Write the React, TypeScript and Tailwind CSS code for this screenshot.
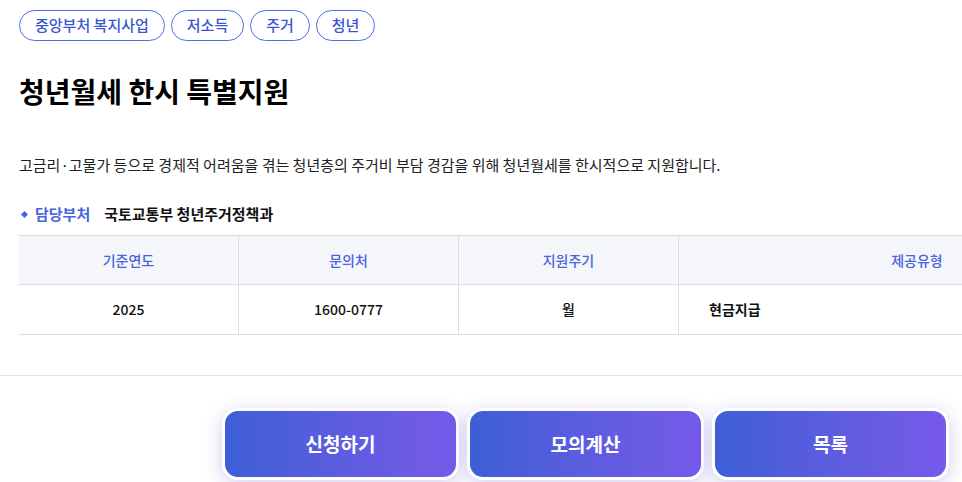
import React from 'react'

const tags = ['중앙부처 복지사업', '저소득', '주거', '청년']

const columns = [
  { label: '기준연도', value: '2025' },
  { label: '문의처', value: '1600-0777' },
  { label: '지원주기', value: '월' },
]

function ActionButton({ label }: { label: string }) {
  return (
    <button className="w-[237px] h-[72px] rounded-[16px] border-[3px] border-white bg-gradient-to-r from-[#3c5ed6] to-[#765ae9] text-white text-[19px] font-bold shadow-[0_4px_18px_rgba(90,80,200,0.28)]">
      {label}
    </button>
  )
}

export default function App() {
  return (
    <div
      className="w-[962px] h-[482px] overflow-hidden bg-white text-[#111]"
      style={{ fontFamily: '"Noto Sans CJK KR", "Noto Sans", sans-serif' }}
    >
      <div className="pl-[19px] pt-[10px]">
        {/* 태그 */}
        <div className="flex gap-[6px]">
          {tags.map((t) => (
            <span
              key={t}
              className="h-[31px] px-[15px] flex items-center rounded-full border border-[#4f6fe6] text-[#3b56d2] text-[15px] font-medium"
            >
              {t}
            </span>
          ))}
        </div>

        <h1 className="mt-[30px] h-[40px] leading-[40px] text-[28px] font-bold text-black">
          청년월세 한시 특별지원
        </h1>

        <p className="mt-[43px] leading-[22px] text-[15px] text-[#222]">
          고금리·고물가 등으로 경제적 어려움을 겪는 청년층의 주거비 부담 경감을 위해 청년월세를 한시적으로 지원합니다.
        </p>

        {/* 담당부처 */}
        <div className="mt-[27px] flex items-center h-[22px] text-[15px] font-bold">
          <span className="ml-[3px] w-[5px] h-[5px] rotate-45 bg-[#4a63e0]" />
          <span className="ml-[8px] text-[#4a63e0]">담당부처</span>
          <span className="ml-[14px] text-[#111]">국토교통부 청년주거정책과</span>
        </div>

        {/* 표 */}
        <div className="mt-[10px] w-[1200px] border-t border-[#dddde2]">
          <div className="flex h-[49px] bg-[#f5f6fa] border-b border-[#dddde2] text-[14px] font-medium text-[#4a63e0]">
            {columns.map((c) => (
              <div key={c.label} className="w-[220px] flex items-center justify-center border-r border-[#dddde2]">
                {c.label}
              </div>
            ))}
            <div className="w-[476px] flex items-center justify-center">제공유형</div>
          </div>
          <div className="flex h-[50px] border-b border-[#dddde2] text-[14px] font-medium text-[#111]">
            {columns.map((c) => (
              <div key={c.label} className="w-[220px] flex items-center justify-center border-r border-[#dddde2]">
                {c.value}
              </div>
            ))}
            <div className="w-[476px] flex items-center pl-[30px] font-semibold">현금지급</div>
          </div>
        </div>
      </div>

      <div className="mt-[40px] border-t border-[#e2e2e6]" />

      {/* 버튼 */}
      <div className="mt-[32px] flex justify-end gap-[8px] pr-[13px]">
        <ActionButton label="신청하기" />
        <ActionButton label="모의계산" />
        <ActionButton label="목록" />
      </div>
    </div>
  )
}
